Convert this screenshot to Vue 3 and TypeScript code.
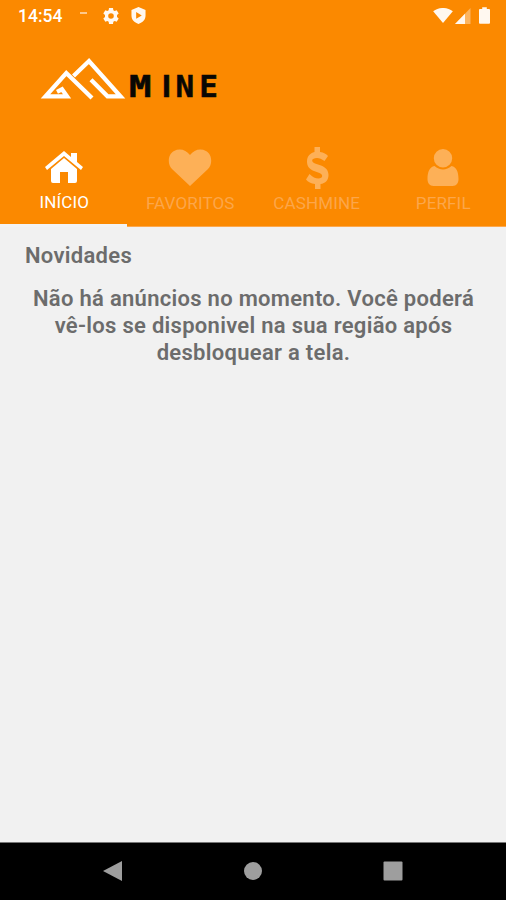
<script setup lang="ts">
import { ref } from 'vue'

interface Tab { id: string; label: string; box: string; width: number; height: number; path: string }

const active = ref('inicio')
const tabs: Tab[] = [
  { id: 'inicio', label: 'INÍCIO', box: '0 0 40 34', width: 40, height: 36,
    path: 'M1 17 20 1l7 6V3h6v9l6 5-2 3L20 6 3 20ZM7 19 20 8l13 11v12q0 2-2 2h-7V22h-8v11H9q-2 0-2-2Z' },
  { id: 'favoritos', label: 'FAVORITOS', box: '0 0 44 38', width: 44, height: 38,
    path: 'M22 37 4 20C-1 15 0 5 6 2c6-3 12-1 16 4 4-5 10-7 16-4 6 3 7 13 2 18Z' },
  { id: 'cashmine', label: 'CASHMINE', box: '0 0 24 44', width: 24, height: 44,
    path: 'M9.500 1h5.500v5c4 .5 6 2 8 4l-3.500 5c-3-2-5-3-7.500-3-6 0-6 4-2 5.500l6 2c5 2 7.500 5 7.500 9.500 0 5-3 8.500-8 9v5h-5.500v-5c-4-.5-7-2-9-4.500l3.500-5.500c3 3 6 4.500 9 4.500 4.500 0 5-4 1-5.500l-5.500-2C4 23 2 20 2 15.500c0-5 3-8.500 7.500-9.500Z' },
  { id: 'perfil', label: 'PERFIL', box: '0 0 32 38', width: 32, height: 38,
    path: 'M16 0a9.200 9.200 0 0 1 0 18.400A9.200 9.200 0 0 1 16 0ZM7.500 17c5 4.500 12 4.500 17 0 5 1 7 6 7 13 0 4-2 7-6 7h-19c-4 0-6-3-6-7 0-7 2-12 7-13Z' },
]
</script>

<template>
  <div class="screen">
    <header class="header">
      <div class="status">
        <time class="clock">14:54</time>
        <i class="dash"></i>
        <svg class="gear" viewBox="2 2 20 20"><path fill-rule="evenodd" d="m9.500 2-.4 2.700-1.700 1L4.900 4.700l-2.500 4.300 2.100 1.700v2.600L2.400 15l2.500 4.300 2.500-1 1.700 1 .4 2.700h5l.4-2.700 1.700-1 2.500 1 2.500-4.300-2.100-1.700v-2.600L21.600 9l-2.500-4.300-2.500 1-1.700-1-.4-2.700ZM12 8.500a3.500 3.500 0 1 1 0 7 3.500 3.500 0 0 1 0-7Z" /></svg>
        <svg class="shield" viewBox="0 0 16 18"><path fill-rule="evenodd" d="m8 0 7.500 3v6c0 4.500-3 7.500-7.500 9C3.500 16.500.5 13.500.5 9V3ZM5.500 5.200v7.300l6-3.600Z" /></svg>
        <div class="signals">
          <svg width="20" height="15" viewBox="0 0 21 16"><path d="M0 3.500C6-1.200 15-1.200 21 3.500L10.500 16Z" /></svg>
          <svg width="16" height="16" viewBox="0 0 16 16"><path opacity=".4" d="M15.500 0v16H0Z" /><path d="M10 5.700V16H0Z" /></svg>
          <svg class="battery" width="12" height="17" viewBox="0 0 12 18"><path d="M3.500 0h5v2H11q1 0 1 1v14q0 1-1 1H1q-1 0-1-1V3q0-1 1-1h2.500Z" /></svg>
        </div>
      </div>

      <svg class="logo" width="190" height="60" viewBox="40 50 190 60">
        <g class="mountains">
          <path d="m73.500 76 15.500-15L120.500 96.300h-13L91 79.800" />
          <path d="M92 98 66.300 73 45.500 96.300h21.500l-5-7-5 2.500" />
        </g>
        <text transform="translate(129 97) scale(1.200 1)">M</text>
        <text y="97"><tspan class="narrow" x="161.700">I</tspan><tspan x="175.500">N</tspan><tspan x="199.300">E</tspan></text>
      </svg>

      <nav class="tabs">
        <button v-for="tab in tabs" :key="tab.id" class="tab" :class="{ active: active === tab.id }" @click="active = tab.id">
          <span class="icon"><svg :width="tab.width" :height="tab.height" :viewBox="tab.box"><path :d="tab.path" /></svg></span>
          <span class="label">{{ tab.label }}</span>
        </button>
      </nav>
    </header>

    <main class="content">
      <h1>Novidades</h1>
      <p>Não há anúncios no momento. Você poderá<br />vê-los se disponivel na sua região após<br />desbloquear a tela.</p>
    </main>

    <footer class="navigation">
      <svg viewBox="0 0 20 22"><path d="M19 1v20L0 11Z" /></svg>
      <svg viewBox="0 0 20 22"><circle cx="10" cy="11" r="9" /></svg>
      <svg viewBox="0 0 20 22"><rect x=".5" y="1.500" width="19" height="19" rx="1" /></svg>
    </footer>
  </div>
</template>

<style>
body { margin: 0; }
</style>

<style scoped>
.screen { width: 506px; height: 900px; display: flex; flex-direction: column; background: #f1f1f1; font-family: Roboto, sans-serif; overflow: hidden; }
.header { height: 227px; display: flex; flex-direction: column; background: #fb8900; box-sizing: border-box; }
.status { height: 32px; display: flex; align-items: center; padding: 0 16px 0 18px; box-sizing: border-box; color: #fff; }
.status svg { fill: #fff8f0; display: block; }
.clock { width: 62px; font-size: 17.500px; font-weight: 500; }
.dash { width: 7px; height: 2px; margin-top: -7px; background: #fdc88b; }
.status .gear { width: 16px; height: 16px; margin-left: 16px; }
.status .shield { width: 15px; height: 17px; margin-left: 12px; margin-top: -1px; }
.signals { display: flex; align-items: center; margin-left: auto; margin-top: -1px; }
.signals .battery { margin-left: 8px; width: 11px; }
.signals svg:nth-child(2) { margin-left: 2px; }
.logo { margin: 18px 0 0 40px; flex: none; overflow: visible; }
.mountains path { fill: none; stroke: #fff; stroke-width: 4.300; }
.logo text { font: 700 31px "DejaVu Sans Mono", monospace; fill: #090704; stroke: #090704; stroke-width: .5; }
.logo .narrow { font-family: Roboto, sans-serif; font-size: 32px; }
.tabs { height: 82px; margin-top: auto; display: grid; grid-template-columns: repeat(4, 1fr); }
.tab { padding: 0 0 0 1px; border: 0; background: none; display: flex; flex-direction: column; align-items: center; font-family: inherit; color: #fdb057; border-bottom: 1px solid #fda84d; }
.tab svg { display: block; fill: currentColor; }
.icon { height: 46px; display: flex; align-items: center; }
.label { font-size: 17px; letter-spacing: .15px; line-height: 20px; margin-top: 2px; white-space: nowrap; color: #fca64a; }
.tab.active { color: #fff; border-bottom: 3px solid #f3f3f3; padding-left: 2px; }
.active .icon { height: 43px; padding-bottom: 2px; }
.active .label { color: #fff; }
.content { flex: 1; padding: 15px 20px 0 25px; color: #6c6c6c; }
h1 { margin: 0; font-size: 22px; line-height: 27px; font-weight: 600; letter-spacing: .3px; }
p { margin: 16px 3px 0 -1px; font-size: 22px; line-height: 27px; font-weight: 600; letter-spacing: .29px; text-align: center; }
.navigation { height: 58px; display: flex; align-items: center; justify-content: space-between; padding: 0 103px 2px 103px; background: #000; border-top: 1px solid #777; box-sizing: border-box; }
.navigation svg { width: 20px; height: 22px; fill: #9e9e9e; }
</style>
